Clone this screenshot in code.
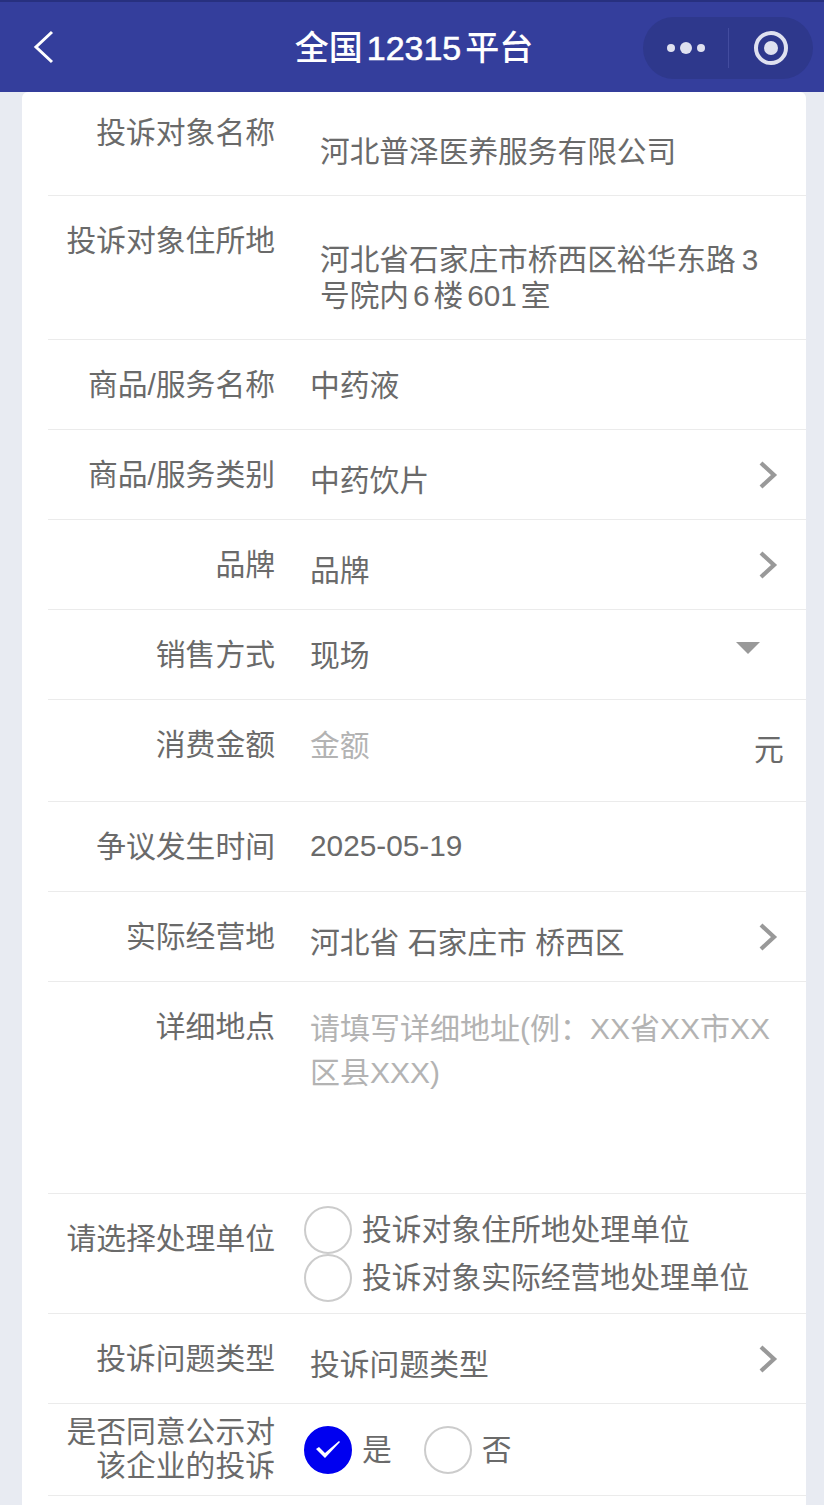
<div class="page">
  <header class="nav">
    <svg class="back" width="24" height="36" viewBox="0 0 24 36"><path d="M20 3 L4 18 L20 33" /></svg>
    <div class="title">全国<span class="gap num">12315</span>平台</div>
    <div class="capsule">
      <div class="dots"><i class="s"></i><i class="b"></i><i class="s"></i></div>
      <div class="sep"></div>
      <div class="target"><i></i></div>
    </div>
  </header>

  <main class="card">
    <div class="row h103 first">
      <div class="label">投诉对象名称</div>
      <div class="value v1">河北普泽医养服务有限公司</div>
    </div>
    <div class="row h144">
      <div class="label">投诉对象住所地</div>
      <div class="value v1 addr">河北省石家庄市桥西区裕华东路<span class="gap wide">3</span><br />号院内<span class="gap">6</span>楼<span class="gap">601</span>室</div>
    </div>
    <div class="row h90">
      <div class="label">商品/服务名称</div>
      <div class="value">中药液</div>
    </div>
    <div class="row h90">
      <div class="label">商品/服务类别</div>
      <div class="value low">中药饮片</div>
      <svg class="chev" width="20" height="30" viewBox="0 0 20 30"><path d="M3 3 L16 15 L3 27" /></svg>
    </div>
    <div class="row h90">
      <div class="label">品牌</div>
      <div class="value low">品牌</div>
      <svg class="chev" width="20" height="30" viewBox="0 0 20 30"><path d="M3 3 L16 15 L3 27" /></svg>
    </div>
    <div class="row h90">
      <div class="label">销售方式</div>
      <div class="value">现场</div>
      <div class="tri"></div>
    </div>
    <div class="row h102">
      <div class="label">消费金额</div>
      <div class="value ph">金额</div>
      <div class="unit">元</div>
    </div>
    <div class="row h90">
      <div class="label">争议发生时间</div>
      <div class="value date latin">2025-05-19</div>
    </div>
    <div class="row h90">
      <div class="label">实际经营地</div>
      <div class="value low date">河北省 石家庄市 桥西区</div>
      <svg class="chev" width="20" height="30" viewBox="0 0 20 30"><path d="M3 3 L16 15 L3 27" /></svg>
    </div>
    <div class="row h212">
      <div class="label">详细地点</div>
      <div class="value ph detail">请填写详细地址(例：XX省XX市XX区县XXX)</div>
    </div>
    <div class="row h120">
      <div class="label">请选择处理单位</div>
      <div class="options">
        <div class="opt"><span class="radio"></span><span>投诉对象住所地处理单位</span></div>
        <div class="opt"><span class="radio"></span><span>投诉对象实际经营地处理单位</span></div>
      </div>
    </div>
    <div class="row h90">
      <div class="label">投诉问题类型</div>
      <div class="value low">投诉问题类型</div>
      <svg class="chev" width="20" height="30" viewBox="0 0 20 30"><path d="M3 3 L16 15 L3 27" /></svg>
    </div>
    <div class="row h92">
      <div class="label two">是否同意公示对<br />该企业的投诉</div>
      <div class="yesno">
        <div class="opt"><span class="radio on"><svg width="24" height="18" viewBox="0 0 24 18"><polygon points="0,8 3,6 9,12 23,0 24,1 9,17" /></svg></span><span>是</span></div>
        <div class="opt"><span class="radio"></span><span>否</span></div>
      </div>
    </div>
    <div class="tail"></div>
  </main>
</div>

<style>
  :global(body) {
    margin: 0;
    background: #e8ebf2;
  }
  :global(html), :global(body) {
    overflow: hidden;
  }
  .page {
    width: 824px;
    height: 1505px;
    overflow: hidden;
    font-family: "Liberation Sans", "Noto Sans CJK SC", sans-serif;
    font-weight: 400;
    font-size: 29.8px;
    color: #6a6a6a;
  }
  .nav {
    height: 92px;
    box-sizing: border-box;
    border-top: 2px solid #27307f;
    background: #343e9c;
    display: flex;
    align-items: center;
    position: relative;
  }
  .back {
    margin-left: 32px;
  }
  .back path {
    fill: none;
    stroke: #fff;
    stroke-width: 3;
  }
  .title {
    position: absolute;
    left: 4px;
    right: 0;
    top: 24px;
    text-align: center;
    font-weight: 500;
    font-size: 34px;
    line-height: 44px;
    color: #fff;
  }
  .gap {
    margin: 0 4px;
  }
  .wide {
    margin-left: 6px;
  }
  .num {
    -webkit-text-stroke: 0.6px #fff;
  }
  .capsule {
    position: absolute;
    left: 643px;
    top: 15px;
    width: 170px;
    height: 62px;
    border-radius: 31px;
    background: #2e388c;
    display: flex;
    align-items: center;
  }
  .dots {
    margin-left: 24px;
    width: 38px;
    display: flex;
    align-items: center;
    justify-content: space-between;
  }
  .dots i {
    display: block;
    border-radius: 50%;
    background: #dfe1f0;
  }
  .dots .s { width: 8px; height: 8px; }
  .dots .b { width: 12px; height: 12px; }
  .sep {
    margin-left: 23px;
    width: 1px;
    height: 40px;
    background: #434c9f;
  }
  .target {
    margin-left: 25px;
    width: 34px;
    height: 34px;
    box-sizing: border-box;
    border: 4px solid #dfe1f0;
    border-radius: 50%;
    display: flex;
    align-items: center;
    justify-content: center;
  }
  .target i {
    display: block;
    width: 14px;
    height: 14px;
    border-radius: 50%;
    background: #dfe1f0;
  }
  .card {
    margin-left: 22px;
    width: 784px;
    background: #fff;
    border-radius: 6px 6px 0 0;
  }
  .row {
    box-sizing: border-box;
    margin-left: 26px;
    display: flex;
    align-items: flex-start;
    border-bottom: 1px solid #ebebeb;
    position: relative;
  }
  .h103 { height: 104px; }
  .h144 { height: 144px; }
  .h90 { height: 90px; }
  .h102 { height: 102px; }
  .h212 { height: 212px; }
  .h120 { height: 120px; }
  .h92 { height: 92px; }
  .label {
    width: 227px;
    flex: none;
    padding-top: 23px;
    line-height: 44px;
    text-align: right;
    white-space: nowrap;
  }
  .first .label { padding-top: 19px; }
  .two {
    padding-top: 11px;
    line-height: 34px;
  }
  .value {
    margin-left: 35px;
    padding-top: 24px;
    line-height: 44px;
    white-space: nowrap;
  }
  .v1 {
    margin-left: 45px;
    padding-top: 38px;
    font-size: 29.7px;
  }
  .addr {
    padding-top: 46px;
    line-height: 36px;
  }
  .low { padding-top: 29px; }
  .date { margin-left: 35px; }
  .latin { padding-top: 22px; }
  .ph {
    color: #b3b3b3;
  }
  .detail {
    white-space: normal;
    width: 464px;
    padding-top: 25px;
    margin-left: 35px;
    font-size: 30px;
  }
  .chev {
    position: absolute;
    left: 710px;
    top: 30px;
  }
  .chev path {
    fill: none;
    stroke: #999;
    stroke-width: 4.2;
  }
  .tri {
    position: absolute;
    left: 688px;
    top: 32px;
    width: 0;
    height: 0;
    border-left: 12px solid transparent;
    border-right: 12px solid transparent;
    border-top: 12px solid #999;
  }
  .unit {
    position: absolute;
    left: 706px;
    top: 28px;
    line-height: 44px;
  }
  .options {
    margin-left: 29px;
    padding-top: 12px;
    display: flex;
    flex-direction: column;
  }
  .opt {
    display: flex;
    align-items: center;
    gap: 10px;
    height: 48px;
    line-height: 44px;
    white-space: nowrap;
  }
  .radio {
    width: 48px;
    height: 48px;
    box-sizing: border-box;
    flex: none;
    border: 2px solid #ccc;
    border-radius: 50%;
    display: flex;
    align-items: center;
    justify-content: center;
  }
  .on {
    background: #0000f0;
    border-color: #0000f0;
  }
  .on polygon {
    fill: #fff;
  }
  .yesno {
    margin-left: 29px;
    padding-top: 22px;
    display: flex;
    gap: 32px;
  }
  .tail {
    height: 40px;
  }
</style>
